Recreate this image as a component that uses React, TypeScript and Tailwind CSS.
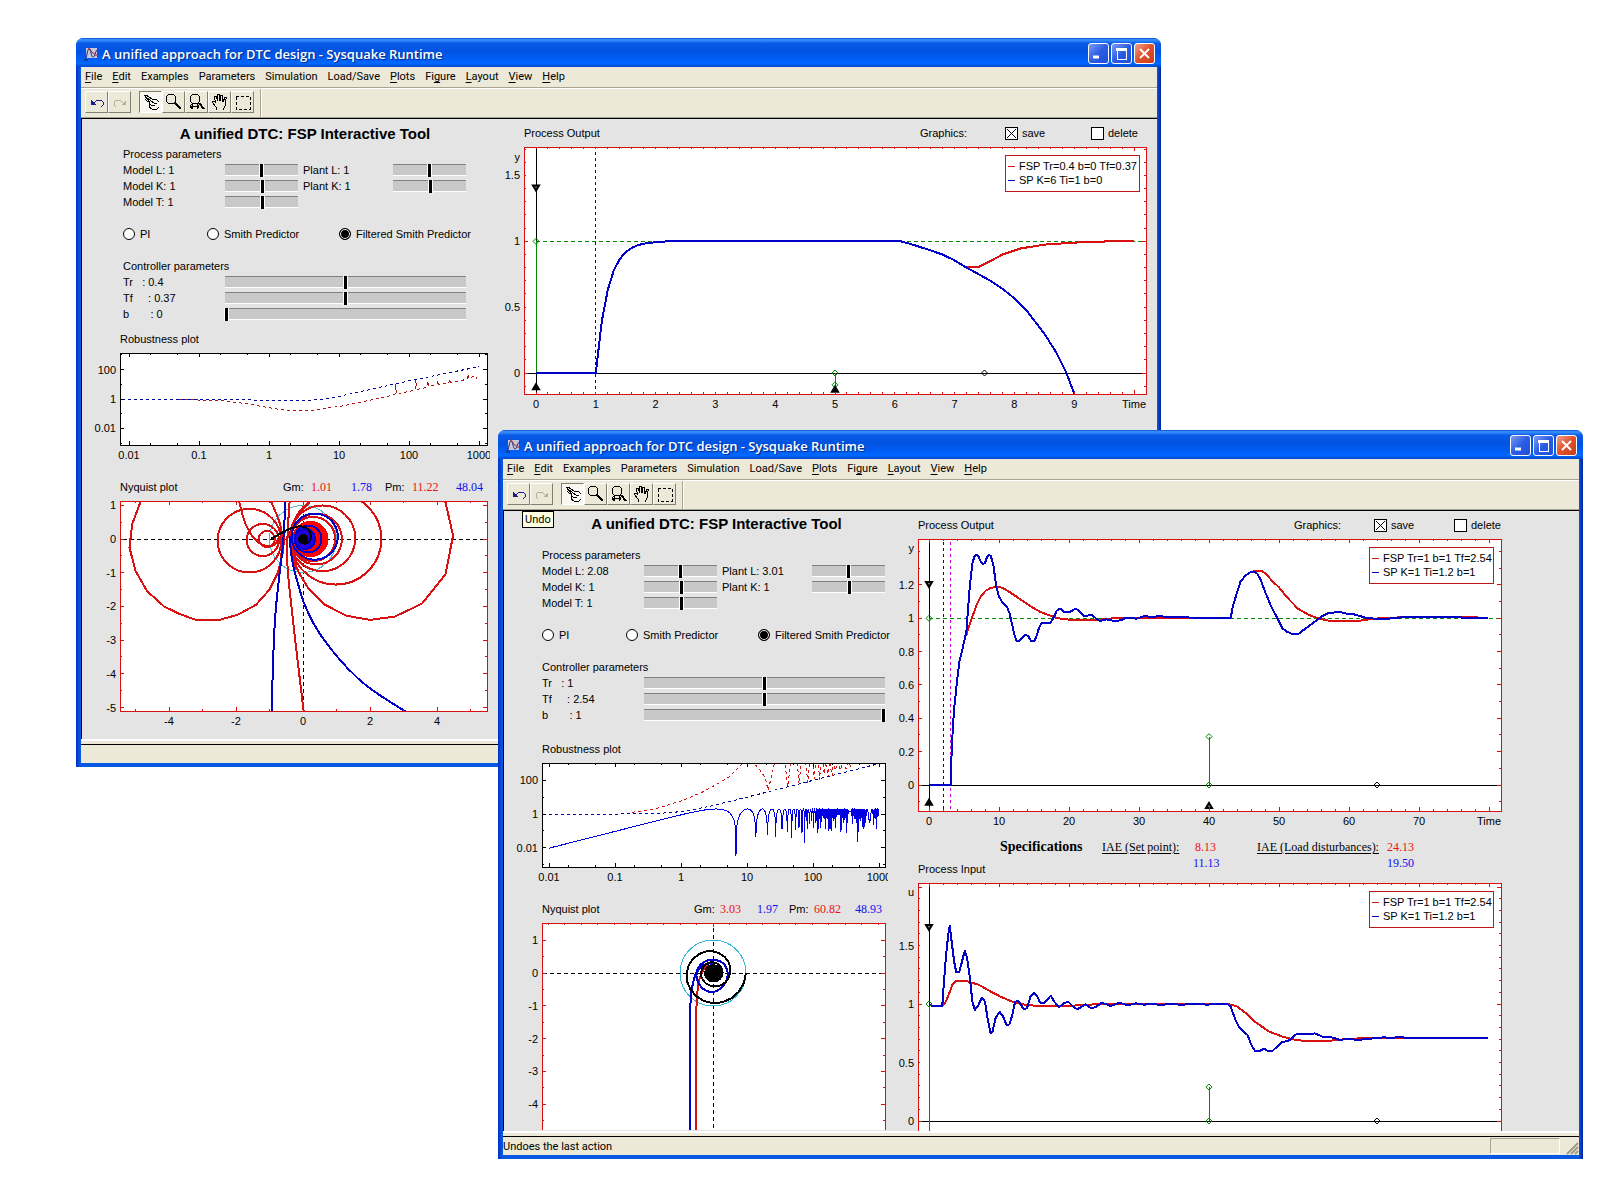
import { createContext, useContext, useId } from "react";
import type { ReactNode } from "react";

type Pt = [number, number];

interface Rect {
  x: number;
  y: number;
  w: number;
  h: number;
}

interface PlotProps {
  label: string;
  height: number;
  width: number;
  frame: Rect;
  // pixel position of the data origin and pixels per data unit
  x0: number;
  ux: number;
  y0: number;
  uy: number;
  color: string;
  xTicks: number[];
  xMinor: number[];
  yTicks: number[];
  yMinor: number[];
  xLabels?: [number, string][];
  yLabels?: [number, string][];
  overlay?: ReactNode;
  children: ReactNode;
}

const RED = "#d81010";
const BLUE = "#0000c8";
const GREEN = "#008a00";

const Scale = createContext({
  sx: (v: number) => v,
  sy: (v: number) => v,
});

function range(from: number, to: number, step: number) {
  const out: number[] = [];
  for (let i = 0; from + i * step <= to + step / 100; i++) out.push(from + i * step);
  return out;
}

function logMinor(from: number, to: number) {
  const out: number[] = [];
  for (let d = from; d < to; d++) out.push(d + Math.log10(2), d + Math.log10(5));
  return out;
}

function Plot(p: PlotProps) {
  const id = useId();
  const { frame: f } = p;
  const sx = (v: number) => p.x0 + v * p.ux;
  const sy = (v: number) => p.y0 - v * p.uy;
  const tickX = (v: number, len: number) =>
    `M${sx(v)} ${f.y}v${len}M${sx(v)} ${f.y + f.h}v${-len}`;
  const tickY = (v: number, len: number) =>
    `M${f.x} ${sy(v)}h${len}M${f.x + f.w} ${sy(v)}h${-len}`;
  const ticks = [
    ...p.xTicks.map((v) => tickX(v, 4)),
    ...p.xMinor.map((v) => tickX(v, 2)),
    ...p.yTicks.map((v) => tickY(v, 4)),
    ...p.yMinor.map((v) => tickY(v, 2)),
  ].join("");

  return (
    <Scale.Provider value={{ sx, sy }}>
      <svg
        role="img"
        aria-label={p.label}
        width={p.width}
        height={p.height}
        className="block shrink-0 overflow-hidden text-[11px]"
        shapeRendering="crispEdges"
      >
        <clipPath id={id}>
          <rect x={f.x} y={f.y} width={f.w} height={f.h} />
        </clipPath>
        <rect x={f.x} y={f.y} width={f.w} height={f.h} fill="white" />
        <g clipPath={`url(#${id})`} fill="none">
          {p.children}
        </g>
        <path d={ticks} stroke={p.color} fill="none" />
        <rect x={f.x} y={f.y} width={f.w} height={f.h} fill="none" stroke={p.color} />
        {p.xLabels?.map(([v, t]) => (
          <text key={t} x={sx(v)} y={f.y + f.h + 14} textAnchor="middle">
            {t}
          </text>
        ))}
        {p.yLabels?.map(([v, t]) => (
          <text key={t} x={f.x - 4} y={sy(v) + 4} textAnchor="end">
            {t}
          </text>
        ))}
        {p.overlay}
      </svg>
    </Scale.Provider>
  );
}

interface CurveProps {
  pts: Pt[];
  color: string;
  width?: number;
  dash?: string;
  smooth?: boolean;
}

function Curve({ pts, color, width = 2, dash, smooth }: CurveProps) {
  const { sx, sy } = useContext(Scale);
  const px = pts.map(([x, y]) => [sx(x), sy(y)]);
  let d = `M${px[0][0].toFixed(1)} ${px[0][1].toFixed(1)}`;
  if (smooth) {
    for (let i = 1; i < px.length - 1; i++) {
      const mx = (px[i][0] + px[i + 1][0]) / 2;
      const my = (px[i][1] + px[i + 1][1]) / 2;
      d += `Q${px[i][0].toFixed(1)} ${px[i][1].toFixed(1)} ${mx.toFixed(1)} ${my.toFixed(1)}`;
    }
    const last = px[px.length - 1];
    d += `L${last[0].toFixed(1)} ${last[1].toFixed(1)}`;
  } else {
    for (const [x, y] of px.slice(1)) d += `L${x.toFixed(1)} ${y.toFixed(1)}`;
  }
  return <path d={d} stroke={color} strokeWidth={width} strokeDasharray={dash} strokeLinejoin="round" />;
}

function Ring({ c, r, color, width = 2, fill }: { c: Pt; r: number; color: string; width?: number; fill?: string }) {
  const { sx, sy } = useContext(Scale);
  const k = sx(1) - sx(0);
  return <circle cx={sx(c[0])} cy={sy(c[1])} r={r * k} stroke={color} strokeWidth={width} fill={fill ?? "none"} />;
}

function Dot({ at, color }: { at: Pt; color: string }) {
  const { sx, sy } = useContext(Scale);
  return <path d={`M${sx(at[0]) - 3} ${sy(at[1])}l3 -3l3 3l-3 3z`} stroke={color} shapeRendering="auto" />;
}

function Arrow({ at, down, hollow }: { at: Pt; down?: boolean; hollow?: boolean }) {
  const { sx, sy } = useContext(Scale);
  const s = down ? 1 : -1;
  return (
    <path
      d={`M${sx(at[0]) - 3} ${sy(at[1]) - 3 * s}h6l-3 ${5 * s}z`}
      stroke="black"
      strokeWidth="2"
      fill={hollow ? "#808080" : "black"}
      shapeRendering="auto"
    />
  );
}

function Legend({ x, w, lines }: { x: number; w: number; lines: [string, string] }) {
  return (
    <g>
      <rect x={x} y={14} width={w} height={36} fill="white" stroke="#c01818" />
      <path d={`M${x + 3} 25h7`} stroke={RED} />
      <path d={`M${x + 3} 39h7`} stroke={BLUE} />
      <text x={x + 14} y={29}>{lines[0]}</text>
      <text x={x + 14} y={43}>{lines[1]}</text>
    </g>
  );
}

/* ---------- plot data ---------- */

const OUT1_BLUE: Pt[] = [
  [0, 0], [1, 0],
  ...range(1.1, 2, 0.1).map((t): Pt => [t, 1 - Math.exp(-5 * (t - 1))]),
  [2.2, 1], [6.1, 1], [6.3, 0.975], [6.5, 0.945], [6.8, 0.9], [7, 0.855], [7.2, 0.8], [7.4, 0.75],
  [7.6, 0.7], [7.8, 0.64], [8, 0.567], [8.2, 0.475], [8.5, 0.3], [8.7, 0.155], [8.87, 0], [9, -0.155],
];
const OUT1_RED: Pt[] = [
  [7.2, 0.805], [7.4, 0.805], [7.6, 0.85], [7.8, 0.9], [8, 0.93], [8.1, 0.945], [8.5, 0.975], [9, 0.99],
  [9.6, 1], [10, 1.003],
];

const OUT2_BLUE: Pt[] = [
  [0, 0], [3.1, 0], [3.2, 0.16], [3.4, 0.34], [3.6, 0.46], [4, 0.62], [4.35, 0.74], [4.8, 0.82],
  [5.35, 0.92], [5.55, 1.04], [5.85, 1.2], [6.2, 1.33], [6.5, 1.372], [6.75, 1.382], [7.05, 1.374],
  [7.35, 1.344], [7.75, 1.326], [8, 1.332], [8.3, 1.368], [8.55, 1.382], [8.85, 1.372], [9.2, 1.32],
  [9.6, 1.19], [10, 1.13], [10.55, 1.09], [11.15, 1.07], [11.5, 1.03], [11.9, 0.96], [12.2, 0.9],
  [12.5, 0.864], [12.9, 0.864], [13.3, 0.88], [13.8, 0.902], [14.2, 0.89], [14.6, 0.864], [15, 0.862],
  [15.35, 0.89], [15.7, 0.94], [16.1, 0.972], [17.35, 0.972], [17.8, 1.004], [18.25, 1.046],
  [18.75, 1.058], [19.25, 1.04], [20.2, 1.04], [20.95, 1.058], [21.5, 1.042], [22.1, 1.014],
  [23.3, 1.02], [24.1, 0.99], [24.5, 0.984], [25.3, 0.994], [26.5, 0.984], [27.4, 0.988], [28.1, 1.002],
  [29.7, 0.998], [30.8, 1.014], [31.8, 1.008], [33.1, 1.014], [34.1, 1.006], [35.5, 1.01], [36.7, 1.006],
  [38, 1.002], [43.1, 1.003], [43.4, 1.07], [43.9, 1.14], [44.5, 1.22], [45.3, 1.26], [46, 1.278],
  [46.4, 1.28], [46.9, 1.268], [47.4, 1.23], [48, 1.16], [48.9, 1.07], [49.9, 0.99], [50.5, 0.94],
  [51.1, 0.92], [51.9, 0.906], [52.7, 0.904], [53.3, 0.924], [54.3, 0.954], [55, 0.976], [56.2, 1.014],
  [57.1, 1.032], [58.7, 1.038], [59.6, 1.028], [60.9, 1.022], [62.5, 1.002], [64.7, 0.994], [68.1, 1.008],
  [73.8, 1.01], [76.3, 1.004], [79.9, 1.002],
];
const OUT2_RED: Pt[] = [
  [5.35, 0.9], [5.7, 0.95], [6.2, 1.01], [6.8, 1.08], [7.4, 1.13], [8.05, 1.164], [8.7, 1.18], [9.5, 1.188],
  [10.4, 1.184], [11.2, 1.166], [12, 1.144], [13.4, 1.104], [14.7, 1.068], [15.9, 1.038], [17.2, 1.018],
  [18.4, 1], [20, 0.992], [23.5, 0.988], [27.2, 1.004], [36, 1.004], [43.1, 1.003], [43.4, 1.07],
  [43.9, 1.14], [44.5, 1.22], [45.3, 1.26], [46, 1.278], [46.9, 1.286], [47.5, 1.284], [48.1, 1.268],
  [49.1, 1.22], [50, 1.186], [51.1, 1.128], [52.7, 1.058], [54.3, 1.02], [55.9, 0.996], [57.4, 0.984],
  [61.2, 0.984], [63.7, 0.998], [67.5, 1.006], [75.7, 1.01], [79.9, 1.002],
];

const IN_BLUE: Pt[] = [
  [0, 1], [0.3, 0.986], [1.9, 0.986], [2.1, 1.16], [2.4, 1.39], [2.75, 1.6], [2.95, 1.67], [3.2, 1.55],
  [3.6, 1.36], [3.9, 1.27], [4.35, 1.276], [4.7, 1.36], [5.1, 1.453], [5.45, 1.39], [5.85, 1.22],
  [6.2, 1.02], [6.55, 0.95], [7, 0.983], [7.55, 1.054], [8, 1.02], [8.4, 0.863], [8.8, 0.752],
  [9.1, 0.769], [9.5, 0.877], [10.1, 0.934], [10.6, 0.892], [11.1, 0.818], [11.5, 0.826], [11.9, 0.906],
  [12.3, 1.02], [12.8, 1.026], [13.5, 0.957], [14, 0.963], [14.5, 1.063], [15, 1.097], [15.4, 1.071],
  [15.9, 1.009], [16.5, 1.011], [17.4, 1.071], [17.9, 1.02], [18.6, 0.972], [19.2, 1.006], [19.9, 1.02],
  [20.6, 0.977], [21.2, 0.954], [22.3, 0.997], [23.2, 0.963], [23.8, 0.974], [24.7, 1.011], [26, 0.983],
  [27.2, 1.011], [28.4, 0.989], [29.5, 1.006], [30.7, 0.994], [32, 1.003], [33, 0.991], [34.8, 1.003],
  [36, 0.991], [37.6, 1.003], [39.8, 0.994], [41, 1.003], [42.6, 1], [43.1, 0.977], [43.7, 0.877],
  [44.3, 0.8], [45.5, 0.735], [46.1, 0.644], [46.6, 0.598], [47.2, 0.598], [47.9, 0.618], [48.4, 0.598],
  [49.1, 0.601], [50.4, 0.672], [51.6, 0.692], [52.5, 0.744], [54.3, 0.741], [55.1, 0.749], [56.2, 0.721],
  [57.4, 0.718], [58.7, 0.692], [59.9, 0.704], [61.2, 0.692], [65, 0.715], [66, 0.71], [67.2, 0.718],
  [68.1, 0.712], [79.8, 0.712],
];
const IN_RED: Pt[] = [
  [0.3, 0.986], [2, 0.986], [2.4, 1.02], [2.8, 1.077], [3.3, 1.16], [3.8, 1.197], [5.1, 1.2], [7.1, 1.165],
  [8.7, 1.11], [10.3, 1.06], [12.3, 1.01], [14, 0.991], [15.9, 0.983], [19.7, 0.983], [23.5, 0.997],
  [42.6, 1], [43.9, 0.983], [45.2, 0.926], [46.4, 0.855], [48.6, 0.764], [50.5, 0.721], [52.4, 0.692],
  [54.3, 0.681], [56.8, 0.684], [59.3, 0.698], [63.1, 0.712], [79.8, 0.712],
];

// robustness curves are given as log10(frequency), log10(magnitude)
const ROB1_BLUE: Pt[] = [
  [-2.1, 0], [-0.6, 0], [0, -0.11], [0.54, -0.11], [0.78, 0], [1.02, 0.2], [1.54, 0.75], [2, 1.24],
  [2.48, 1.7], [3, 2.2],
];
const ROB1_RED: Pt[] = [
  [-1.28, -0.04], [-0.7, -0.1], [-0.35, -0.3], [0, -0.59], [0.21, -0.75], [0.64, -0.75], [1.06, -0.47],
  [1.54, 0.02], [1.8, 0.3], [1.81, 1], [1.82, 0.35], [2.09, 0.6], [2.1, 1.27], [2.12, 0.65], [2.26, 0.8],
  [2.27, 1.2], [2.28, 0.85], [2.4, 1], [2.4, 1.25], [2.42, 1], [2.57, 1.1], [2.58, 1.35], [2.6, 1.1],
  [2.83, 1.35], [2.84, 1.7], [2.86, 1.4], [2.95, 1.6], [2.97, 1.35], [3, 1.5],
];
const ROB2_DASH: Pt[] = range(-2, 3, 0.05).map((x): Pt => [x, 0.5 * Math.log10(1 + 100 ** x)]);
const ROB2_SOLID: Pt[] = range(-2, 3, 0.0041).map((x): Pt => [
  x,
  Math.log10(Math.max(0.003, 2 * Math.abs(Math.sin(0.4615 * 10 ** x)))),
]);
const ROB2_RED: Pt[] = [
  [-0.74, 0.1], [-0.4, 0.3], [0.02, 0.8], [0.32, 1.3], [0.52, 1.72], [0.72, 2.18], [0.85, 2.67], [0.95, 3.1],
  [1.09, 3.1], [1.22, 2.5], [1.28, 2.1], [1.32, 1.4], [1.35, 1.9], [1.38, 2.4], [1.42, 3.1],
  [1.57, 3.1], [1.62, 1.64], [1.66, 3.1], [1.76, 3.1], [1.79, 1.78], [1.82, 3.1], [1.89, 3.1],
  [1.92, 1.88], [1.95, 3.1], [2, 3.1], [2.02, 2.1], [2.04, 3.1], [2.08, 3.1], [2.1, 2.05], [2.12, 3.1],
  [2.15, 3.1], [2.17, 2.4], [2.19, 3.1], [2.23, 2.2], [2.25, 3.1], [2.29, 2.3], [2.31, 3.1], [2.34, 2.6],
  [2.37, 3.1], [2.42, 2.6], [2.44, 3.1], [2.5, 2.7], [2.53, 3.1], [2.58, 2.8], [2.6, 3.1],
];

const NYQ1_RINGS: { c: Pt; r: number }[] = [
  { c: [-1.6, -0.05], r: 0.95 },
  { c: [-1.2, -0.03], r: 0.48 },
  { c: [-1.08, 0], r: 0.24 },
  { c: [0.98, 0], r: 1.36 },
  { c: [0.58, 0.02], r: 0.98 },
  { c: [0.4, 0], r: 0.76 },
  { c: [0.3, 0], r: 0.66 },
];
const NYQ1_BIG_LEFT: Pt[] = [
  [-4.83, 1.15], [-5.1, 0.45], [-5.18, -0.25], [-5, -0.95], [-4.65, -1.55], [-4.15, -2], [-3.7, -2.22],
  [-3.2, -2.4], [-2.5, -2.4], [-1.95, -2.25], [-1.4, -1.95], [-1, -1.5], [-0.75, -1], [-0.6, -0.4], [-0.55, 0.2],
];
const NYQ1_BIG_RIGHT: Pt[] = [
  [4.24, 1.15], [4.48, 0.1], [4.25, -1.05], [3.55, -1.92], [2.75, -2.3], [2, -2.4], [1.3, -2.28],
  [0.65, -1.95], [0.15, -1.45], [-0.15, -0.95], [-0.35, -0.4], [-0.42, 0.2],
];
const NYQ1_HOOK: Pt[] = [[-1.9, 1.1], [-1.8, 0.65], [-1.63, 0.25], [-1.4, -0.08], [-1.05, -0.25], [-0.8, -0.15], [-0.72, 0.05]];
const NYQ1_RED: Pt[] = [[-0.4, 1.1], [-0.48, 0], [-0.47, -0.92], [-0.32, -2.2], [-0.2, -3.3], [0.03, -5.2]];
const NYQ1_FAN1: Pt[] = [[-0.95, 1.1], [-0.72, 0.6], [-0.6, 0.1], [-0.65, -0.6], [-0.75, -1.1]];
const NYQ1_FAN2: Pt[] = [[0.2, 1.1], [-0.2, 0.7], [-0.4, 0.1], [-0.36, -0.5], [-0.2, -0.9]];
const NYQ1_BLUE_L: Pt[] = [[-0.53, 1.1], [-0.56, 0.08], [-0.7, -1], [-0.83, -2.2], [-0.88, -3.2], [-0.94, -5.2]];
const NYQ1_BLUE_R: Pt[] = [
  [-0.4, 0.1], [-0.36, -0.6], [-0.1, -1.5], [0, -1.85], [0.32, -2.55], [0.7, -3.1], [1.3, -3.83],
  [2, -4.46], [3.03, -5.1], [3.2, -5.2],
];
const NYQ1_BLACK: Pt[] = [[-0.96, 0], [-0.55, 0.24], [-0.2, 0.38], [0.05, 0.38], [0.23, 0.22], [0.25, 0], [0.12, -0.15], [-0.05, -0.12]];

const SPIRAL = [1, 0.92, 0.8, 0.66, 0.52, 0.4, 0.36, 0.33, 0.29, 0.26, 0.24, 0.22];
const NYQ2_BLACK: Pt[] = range(0, 10.8, 0.2).map((q): Pt => {
  const i = Math.floor(q);
  const r = SPIRAL[i] + (SPIRAL[i + 1] - SPIRAL[i]) * (q - i);
  return [r * Math.cos((q * Math.PI) / 2), -r * Math.sin((q * Math.PI) / 2)];
});
const NYQ2_BLUE: Pt[] = [
  [-0.71, -6], [-0.7, -1.62], [-0.68, -0.71], [-0.59, -0.2], [-0.44, 0.2], [-0.25, 0.36], [-0.05, 0.42],
  [0.22, 0.37], [0.4, 0.22], [0.47, -0.1], [0.3, -0.46], [-0.05, -0.62], [-0.38, -0.45], [-0.53, -0.1],
  [-0.44, 0.15], [-0.2, 0.3], [0, 0.28],
];
const NYQ2_RED: Pt[] = [[-0.53, -6], [-0.52, -1.62], [-0.49, -0.71], [-0.43, -0.2], [-0.3, 0.1], [-0.15, 0.25]];

const DECADES: [number, string][] = [
  [-2, "0.01"], [-1, "0.1"], [0, "1"], [1, "10"], [2, "100"], [3, "1000"],
];
const MAGNITUDES: [number, string][] = [[2, "100"], [0, "1"], [-2, "0.01"]];

/* ---------- window chrome ---------- */

function AppIcon() {
  return (
    <svg width="14" height="14" viewBox="0 0 14 14" fill="none" aria-hidden="true">
      <rect x="2" y="1" width="11" height="10" fill="#c4c8dc" />
      <path d="M1 12C3 12 3 2 5 2s2 8 4 8 2-5 4-7" stroke="#1c2c7c" />
      <path d="M4 1c3 0 3 5 5 5s1 3 4 2" stroke="#c02020" />
      <path d="M0 13h4" stroke="#20204c" />
    </svg>
  );
}

const TITLE_BUTTON = "flex size-[21px] items-center justify-center rounded-[3px] border border-white";

function TitleBar() {
  return (
    <header className="flex h-[29px] items-center gap-1 rounded-t-[7px] bg-[linear-gradient(to_bottom,#0450d0_0%,#3c94ff_6%,#0a5ce8_18%,#0052e0_45%,#005cf4_70%,#0068ff_88%,#0048cc_100%)] pt-[2px] pr-[6px] pl-2">
      <AppIcon />
      <h1 className="min-w-0 flex-1 truncate font-['Open_Sans',sans-serif] text-[13px] leading-5 font-semibold text-white [text-shadow:1px_1px_1px_#0a2a80]">
        A unified approach for DTC design - Sysquake Runtime
      </h1>
      <div className="flex gap-[2px]">
        <button aria-label="Minimize" className={`${TITLE_BUTTON} bg-[linear-gradient(135deg,#7c9cf4,#2c5ce4_50%,#2050d8)]`}>
          <svg width="13" height="13" aria-hidden="true">
            <path d="M1 10h6" stroke="white" strokeWidth="3" />
          </svg>
        </button>
        <button aria-label="Maximize" className={`${TITLE_BUTTON} bg-[linear-gradient(135deg,#7c9cf4,#2c5ce4_50%,#2050d8)]`}>
          <svg width="13" height="13" fill="none" stroke="white" aria-hidden="true" shapeRendering="crispEdges">
            <path d="M1 2h11" strokeWidth="3" />
            <path d="M2 2v10h9V2" />
          </svg>
        </button>
        <button aria-label="Close" className={`${TITLE_BUTTON} bg-[linear-gradient(135deg,#f0a088,#e0502c_50%,#c83c14)]`}>
          <svg width="13" height="13" stroke="white" strokeWidth="2" aria-hidden="true">
            <path d="M2 2l9 9M11 2l-9 9" />
          </svg>
        </button>
      </div>
    </header>
  );
}

// text before the mnemonic, mnemonic, text after it
const MENUS: [string, string, string][] = [
  ["", "F", "ile"],
  ["", "E", "dit"],
  ["Examples", "", ""],
  ["Parameters", "", ""],
  ["Simulation", "", ""],
  ["Load/Save", "", ""],
  ["", "P", "lots"],
  ["Fi", "g", "ure"],
  ["", "L", "ayout"],
  ["", "V", "iew"],
  ["", "H", "elp"],
];

function MenuBar() {
  return (
    <nav className="flex h-5 items-center gap-[10px] pl-1 font-['Roboto',sans-serif] text-[11px] leading-4">
      {MENUS.map(([pre, key, post]) => (
        <button key={pre + key + post} className="whitespace-nowrap">
          {pre}
          {key && <span className="underline underline-offset-2">{key}</span>}
          {post}
        </button>
      ))}
    </nav>
  );
}

function ToolButton({ label, pressed, children }: { label: string; pressed?: boolean; children: ReactNode }) {
  const look = pressed
    ? "bg-[#f8f7f2] border-t-[#808070] border-l-[#808070] border-r-white border-b-white"
    : "border-t-white border-l-white border-r-[#808070] border-b-[#808070]";
  return (
    <button aria-label={label} className={`flex h-[22px] w-[23px] items-center justify-center border ${look}`}>
      <svg width="18" height="18" fill="none" stroke="black" aria-hidden="true" shapeRendering="crispEdges">
        {children}
      </svg>
    </button>
  );
}

function Toolbar() {
  return (
    <div className="flex h-[29px] items-start border-t border-t-white pt-[2px] pl-1">
      <ToolButton label="Undo">
        <path d="M5 11L9 7h4l2 2v3l-2 2" stroke="#1c1c8c" />
        <path d="M3 7v5h5z" fill="#1c1c8c" stroke="none" />
      </ToolButton>
      <ToolButton label="Redo">
        <path d="M13 11L9 7H5L3 9v3l2 2" stroke="#b4b09c" />
        <path d="M15 7v5h-5z" fill="#b4b09c" stroke="none" />
      </ToolButton>
      <div className="w-2" />
      <ToolButton label="Interact" pressed>
        <path d="M2 2l6 7M2 2h2l6 4h4l2 2v1M4 4l5 4M8 9L5 8 3 6M8 9l-1 2 2 1M7 11v3l3 2h5l2-2M9 8l3 2 3 1M9 12h4" />
      </ToolButton>
      <ToolButton label="Zoom">
        <circle cx="6" cy="6" r="5" />
        <path d="M10 10l6 6" strokeWidth="2" />
      </ToolButton>
      <ToolButton label="Zoom X">
        <circle cx="7" cy="6" r="5" />
        <path d="M11 10l5 6" strokeWidth="2" />
        <path d="M2 13h9M4 11v5M9 11v5M2 13l2-2M2 13l2 3M11 13l-2-2M11 13l-2 3" />
      </ToolButton>
      <ToolButton label="Drag">
        <path d="M6 17l-1-3-4-5 1-1h1l2 2M5 10L3 4l1-1h1l2 5M7 8L6 2l1-1h1l1 7M9 8l1-6h1l1 1-1 6M12 9l2-5h1v2l-1 7-2 4" />
      </ToolButton>
      <ToolButton label="Select">
        <rect x="2" y="3" width="14" height="13" strokeDasharray="3 2" />
      </ToolButton>
      <div className="-mt-[2px] ml-[6px] h-7 w-[2px] border-r border-l border-r-white border-l-[#a8a490]" />
    </div>
  );
}

function StatusBar({ text, grip }: { text: string; grip?: boolean }) {
  return (
    <footer className="flex h-6 flex-col font-['Roboto',sans-serif] text-[11px]">
      <div className="h-[6px] border-t-2 border-b border-t-white border-b-black" />
      <div className="flex flex-1 items-end justify-end gap-[6px]">
        <span className="flex-1 leading-4">{text}</span>
        {grip && (
          <>
            <span className="mb-px h-4 w-[70px] border border-t-[#a8a490] border-r-white border-b-white border-l-[#a8a490]" />
            <svg width="13" height="16" aria-hidden="true">
              <path d="M1 15L12 4M5 15l7-7M9 15l3-3" stroke="#a09c88" strokeWidth="2" />
            </svg>
          </>
        )}
      </div>
    </footer>
  );
}

interface WindowProps {
  place: string;
  status: string;
  grip?: boolean;
  tooltip?: string;
  children: ReactNode;
}

function Window({ place, status, grip, tooltip, children }: WindowProps) {
  return (
    <section className={`absolute flex w-[1085px] flex-col rounded-t-[8px] bg-[linear-gradient(to_right,#0030c0,#0858e4_4px,#0858e4_1081px,#0020a0)] pr-1 pb-1 pl-[5px] ${place}`}>
      <div className="-mr-1 -ml-[5px]">
        <TitleBar />
      </div>
      <div className="flex min-h-0 flex-1 flex-col bg-[#ece9d8]">
        <MenuBar />
        <div className="h-px bg-[#a8a490]" />
        <Toolbar />
        <div className="h-[2px] border-b border-black bg-[#a8a490]" />
        <div className="relative flex min-h-0 flex-1 border-l border-black bg-[#e4e4e4]">
          {children}
          {tooltip && (
            <div role="tooltip" className="absolute top-0 left-[18px] border border-black bg-[#ffffe1] px-[2px] font-['Roboto',sans-serif] text-[11px] leading-[15px]">
              {tooltip}
            </div>
          )}
        </div>
        <StatusBar text={status} grip={grip} />
      </div>
    </section>
  );
}

/* ---------- figure controls ---------- */

function Slider({ id, pos }: { id: string; pos: number }) {
  return (
    <input
      id={id}
      type="range"
      min={0}
      max={100}
      defaultValue={pos}
      className="block h-3 w-full appearance-none border-y border-t-[#808080] border-b-white bg-[#c8c8c8] [&::-webkit-slider-thumb]:h-[13px] [&::-webkit-slider-thumb]:w-[3px] [&::-webkit-slider-thumb]:appearance-none [&::-webkit-slider-thumb]:bg-black [&::-webkit-slider-thumb]:shadow-[1px_0_0_white,-1px_0_0_white]"
    />
  );
}

interface ParamsProps {
  name: string;
  modelL: string;
  plantL: string;
  tr: string;
  tf: string;
  b: string;
  bPos: number;
}

function Parameters({ name, modelL, plantL, tr, tf, b, bPos }: ParamsProps) {
  return (
    <div className="leading-4">
      <p>Process parameters</p>
      <div className="grid grid-cols-[102px_73px_95px_73px] items-center">
        <label htmlFor={`${name}-ml`}>Model L: {modelL}</label>
        <Slider id={`${name}-ml`} pos={50} />
        <label htmlFor={`${name}-pl`} className="pl-[5px]">Plant L: {plantL}</label>
        <Slider id={`${name}-pl`} pos={50} />
        <label htmlFor={`${name}-mk`}>Model K: 1</label>
        <Slider id={`${name}-mk`} pos={51} />
        <label htmlFor={`${name}-pk`} className="pl-[5px]">Plant K: 1</label>
        <Slider id={`${name}-pk`} pos={51} />
        <label htmlFor={`${name}-mt`}>Model T: 1</label>
        <Slider id={`${name}-mt`} pos={51} />
      </div>
      <div className="grid grid-cols-[84px_132px_auto] py-4">
        {["PI", "Smith Predictor", "Filtered Smith Predictor"].map((t, i) => (
          <label key={t} className="flex items-center gap-[5px] whitespace-nowrap">
            <input
              type="radio"
              name={`${name}-kind`}
              defaultChecked={i === 2}
              className="size-3 appearance-none rounded-full border border-black bg-white checked:bg-black checked:shadow-[inset_0_0_0_1px_white]"
            />
            {t}
          </label>
        ))}
      </div>
      <p>Controller parameters</p>
      <div className="grid grid-cols-[102px_241px] items-center">
        <label htmlFor={`${name}-tr`} className="whitespace-pre">{`Tr   : ${tr}`}</label>
        <Slider id={`${name}-tr`} pos={50} />
        <label htmlFor={`${name}-tf`} className="whitespace-pre">{`Tf     : ${tf}`}</label>
        <Slider id={`${name}-tf`} pos={50} />
        <label htmlFor={`${name}-b`} className="whitespace-pre">{`b       : ${b}`}</label>
        <Slider id={`${name}-b`} pos={bPos} />
      </div>
    </div>
  );
}

function CheckBox({ text, checked }: { text: string; checked?: boolean }) {
  return (
    <label className="flex items-center gap-1">
      <span className="relative flex">
        <input type="checkbox" defaultChecked={checked} className="peer size-[13px] appearance-none border border-black bg-white" />
        <svg className="pointer-events-none absolute inset-0 hidden peer-checked:block" width="13" height="13" stroke="black" aria-hidden="true">
          <path d="M2 2l9 9M11 2l-9 9" />
        </svg>
      </span>
      {text}
    </label>
  );
}

function OutputHeader({ cols }: { cols: string }) {
  return (
    <div className={`grid leading-4 ${cols}`}>
      <span>Process Output</span>
      <span>Graphics:</span>
      <CheckBox text="save" checked />
      <CheckBox text="delete" />
    </div>
  );
}

function NyquistHeader({ gm, pm, cols }: { gm: [string, string]; pm: [string, string]; cols: string }) {
  const serif = "font-['Liberation_Serif',serif] text-[12px]";
  return (
    <div className={`grid leading-4 ${cols}`}>
      <span>Nyquist plot</span>
      <span>Gm:</span>
      <span className={`${serif} text-[#f01010]`}>{gm[0]}</span>
      <span className={`${serif} text-[#1010f0]`}>{gm[1]}</span>
      <span>Pm:</span>
      <span className={`${serif} text-[#f01010]`}>{pm[0]}</span>
      <span className={`${serif} text-[#1010f0]`}>{pm[1]}</span>
    </div>
  );
}

const FIGURE_TITLE = "text-center text-[15px] leading-[18px] font-bold";

/* ---------- figures ---------- */

function FirstFigure() {
  return (
    <>
      <div className="flex w-[408px] shrink-0 flex-col pt-[6px] pl-2">
        <h2 className={`${FIGURE_TITLE} pl-[30px]`}>A unified DTC: FSP Interactive Tool</h2>
        <div className="pt-[3px] pl-[33px]">
          <Parameters name="w1" modelL="1" plantL="1" tr="0.4" tf="0.37" b="0" bPos={0} />
        </div>
        <h3 className="mt-[9px] pl-[30px] leading-4">Robustness plot</h3>
        <Plot
          label="Robustness plot"
          width={400}
          height={132}
          frame={{ x: 30, y: 6, w: 367, h: 92 }}
          x0={179}
          ux={70}
          y0={52}
          uy={14.7}
          color="black"
          xTicks={range(-2, 3, 1)}
          xMinor={logMinor(-2, 3)}
          yTicks={[-2, 0, 2]}
          yMinor={[-3, -1, 1, 3]}
          xLabels={DECADES}
          yLabels={MAGNITUDES}
        >
          <Curve pts={ROB1_RED} color="#b01010" width={1} dash="3 3" />
          <Curve pts={ROB1_BLUE} color="#0000a0" width={1} dash="3 3" />
        </Plot>
        <NyquistHeader gm={["1.01", "1.78"]} pm={["11.22", "48.04"]} cols="grid-cols-[163px_28px_40px_34px_27px_44px_auto] pl-[30px]" />
        <Plot
          label="Nyquist plot"
          width={400}
          height={243}
          frame={{ x: 30, y: 6, w: 367, h: 210 }}
          x0={213}
          ux={33.5}
          y0={44}
          uy={33.7}
          color={RED}
          xTicks={[-4, -2, 0, 2, 4]}
          xMinor={range(-5, 5, 1)}
          yTicks={range(-5, 1, 1)}
          yMinor={range(-5, 1, 0.5)}
          xLabels={[[-4, "-4"], [-2, "-2"], [0, "0"], [2, "2"], [4, "4"]]}
          yLabels={[[1, "1"], [0, "0"], [-1, "-1"], [-2, "-2"], [-3, "-3"], [-4, "-4"], [-5, "-5"]]}
        >
          <Curve pts={[[-6, 0], [6, 0]]} color="black" width={1} dash="4 3" />
          <Curve pts={[[0, 2], [0, -6]]} color="black" width={1} dash="4 3" />
          <Ring c={[0, 0]} r={1} color="#50b0d0" width={1} />
          {NYQ1_RINGS.map((r) => (
            <Ring key={r.r} c={r.c} r={r.r} color={RED} />
          ))}
          <Curve pts={NYQ1_BIG_LEFT} color={RED} />
          <Curve pts={NYQ1_BIG_RIGHT} color={RED} />
          <Curve pts={NYQ1_HOOK} color={RED} smooth />
          <Curve pts={NYQ1_FAN1} color={RED} smooth />
          <Curve pts={NYQ1_FAN2} color={RED} smooth />
          <Ring c={[0.22, 0]} r={0.42} color="#ff0000" width={8} fill="#ff0000" />
          <Curve pts={NYQ1_RED} color={RED} smooth />
          <Curve pts={NYQ1_BLUE_L} color={BLUE} smooth />
          <Curve pts={NYQ1_BLUE_R} color={BLUE} smooth />
          <Ring c={[0.35, 0.07]} r={0.69} color={BLUE} />
          <Ring c={[0.15, 0]} r={0.4} color={BLUE} />
          <Ring c={[0.06, 0]} r={0.3} color={BLUE} fill="#2000e0" />
          <Curve pts={NYQ1_BLACK} color="black" smooth />
          <Ring c={[0, 0]} r={0.12} color="black" fill="black" />
        </Plot>
      </div>
      <div className="min-w-0 flex-1 pt-[6px]">
        <OutputHeader cols="grid-cols-[396px_85px_86px_auto] pl-[34px]" />
        <Plot
          label="Process output"
          width={664}
          height={280}
          frame={{ x: 34, y: 6, w: 622, h: 247 }}
          x0={46}
          ux={59.8}
          y0={232}
          uy={131.7}
          color={RED}
          xTicks={[10]}
          xMinor={range(0, 10, 0.2)}
          yTicks={[0, 1]}
          yMinor={range(-0.1, 1.7, 0.1)}
          xLabels={[...range(0, 9, 1).map((v): [number, string] => [v, String(v)]), [10, "Time"]]}
          yLabels={[[1.64, "y"], [1.5, "1.5"], [1, "1"], [0.5, "0.5"], [0, "0"]]}
          overlay={<Legend x={515} w={134} lines={["FSP Tr=0.4 b=0 Tf=0.37", "SP K=6 Ti=1 b=0"]} />}
        >
          <Curve pts={[[0, 2], [0, -1]]} color="black" width={1} />
          <Curve pts={[[-1, 0], [11, 0]]} color="black" width={1} />
          <Curve pts={[[0, 1], [11, 1]]} color={GREEN} width={1} dash="4 3" />
          <Curve pts={[[0, 1], [0, 0]]} color={GREEN} width={1} />
          <Curve pts={[[1, 2], [1, -1]]} color={BLUE} width={1} dash="3 3" />
          <Curve pts={OUT1_RED} color={RED} />
          <Curve pts={OUT1_BLUE} color={BLUE} />
          <Curve pts={[[5, 0], [5, -0.1]]} color={GREEN} width={1} />
          <Dot at={[0, 1]} color={GREEN} />
          <Dot at={[5, 0]} color={GREEN} />
          <Dot at={[5, -0.09]} color={GREEN} />
          <Dot at={[7.5, 0]} color="black" />
          <Arrow at={[0, 1.4]} down hollow />
          <Arrow at={[0, -0.1]} />
          <Arrow at={[5, -0.12]} />
        </Plot>
      </div>
    </>
  );
}

function SecondFigure() {
  const shared = {
    width: 690,
    x0: 41,
    ux: 7,
    color: RED,
    xTicks: range(0, 80, 10),
    xMinor: range(0, 80, 2),
  };
  const legend = <Legend x={481} w={124} lines={["FSP Tr=1 b=1 Tf=2.54", "SP K=1 Ti=1.2 b=1"]} />;
  const link = "whitespace-nowrap underline underline-offset-2";

  return (
    <>
      <div className="flex w-[384px] shrink-0 flex-col pt-1 pl-2">
        <h2 className={`${FIGURE_TITLE} pl-[33px]`}>A unified DTC: FSP Interactive Tool</h2>
        <div className="pt-[14px] pl-[30px]">
          <Parameters name="w2" modelL="2.08" plantL="3.01" tr="1" tf="2.54" b="1" bPos={100} />
        </div>
        <h3 className="mt-[18px] pl-[30px] leading-4">Robustness plot</h3>
        <Plot
          label="Robustness plot"
          width={376}
          height={144}
          frame={{ x: 30, y: 6, w: 343, h: 104 }}
          x0={169}
          ux={66}
          y0={57}
          uy={16.8}
          color="black"
          xTicks={range(-2, 3, 1)}
          xMinor={logMinor(-2, 3)}
          yTicks={[-2, 0, 2]}
          yMinor={[-3, -1, 1, 3]}
          xLabels={DECADES}
          yLabels={MAGNITUDES}
        >
          <Curve pts={ROB2_RED} color={RED} width={1} dash="3 3" />
          <Curve pts={ROB2_DASH} color="#0000a0" width={1} dash="3 3" />
          <Curve pts={ROB2_SOLID} color="#0000e0" width={1} />
        </Plot>
        <NyquistHeader gm={["3.03", "1.97"]} pm={["60.82", "48.93"]} cols="grid-cols-[152px_26px_37px_32px_25px_41px_auto] pl-[30px]" />
        <Plot
          label="Nyquist plot"
          width={376}
          height={213}
          frame={{ x: 30, y: 6, w: 343, h: 240 }}
          x0={201}
          ux={33}
          y0={56}
          uy={32.8}
          color={RED}
          xTicks={[0]}
          xMinor={range(-5, 5, 0.5)}
          yTicks={range(-5, 1, 1)}
          yMinor={range(-5, 1, 0.5)}
          yLabels={[[1, "1"], [0, "0"], [-1, "-1"], [-2, "-2"], [-3, "-3"], [-4, "-4"]]}
        >
          <Curve pts={[[-6, 0], [6, 0]]} color="black" width={1} dash="4 3" />
          <Curve pts={[[0, 2], [0, -6]]} color="black" width={1} dash="4 3" />
          <Ring c={[0, 0]} r={1} color="#30b8d8" width={1} />
          <Curve pts={NYQ2_RED} color={RED} smooth />
          <Curve pts={NYQ2_BLUE} color={BLUE} smooth />
          <Curve pts={NYQ2_BLACK} color="black" />
          <Ring c={[0, 0]} r={0.24} color="black" fill="black" />
        </Plot>
      </div>
      <div className="flex min-w-0 flex-1 flex-col overflow-hidden pt-[6px]">
        <OutputHeader cols="grid-cols-[376px_80px_80px_auto] pl-[30px]" />
        <Plot
          {...shared}
          label="Process output"
          height={306}
          frame={{ x: 30, y: 6, w: 583, h: 272 }}
          y0={252}
          uy={166.7}
          yTicks={range(0, 1.2, 0.2)}
          yMinor={range(-0.1, 1.4, 0.1)}
          xLabels={[...range(0, 70, 10).map((v): [number, string] => [v, String(v)]), [80, "Time"]]}
          yLabels={[[1.42, "y"], [1.2, "1.2"], [1, "1"], [0.8, "0.8"], [0.6, "0.6"], [0.4, "0.4"], [0.2, "0.2"], [0, "0"]]}
          overlay={legend}
        >
          <Curve pts={[[0, 2], [0, -1]]} color="black" width={1} />
          <Curve pts={[[-2, 0], [90, 0]]} color="black" width={1} />
          <Curve pts={[[0, 1], [90, 1]]} color={GREEN} width={1} dash="4 3" />
          <Curve pts={[[0, 1], [0, 0]]} color={GREEN} width={1} />
          <Curve pts={[[2.1, 2], [2.1, -1]]} color={BLUE} width={1} dash="3 3" />
          <Curve pts={[[3, 2], [3, -1]]} color="#d800d8" width={1} dash="3 3" />
          <Curve pts={OUT2_RED} color={RED} />
          <Curve pts={OUT2_BLUE} color={BLUE} />
          <Curve pts={[[40, 0], [40, 0.29]]} color={GREEN} width={1} />
          <Dot at={[0, 1]} color={GREEN} />
          <Dot at={[40, 0.29]} color={GREEN} />
          <Dot at={[40, 0]} color={GREEN} />
          <Dot at={[64, 0]} color="black" />
          <Arrow at={[0, 1.2]} down hollow />
          <Arrow at={[0, -0.1]} />
          <Arrow at={[40, -0.12]} hollow />
        </Plot>
        <div className="grid grid-cols-[102px_91px_64px_130px_auto] pl-28 font-['Liberation_Serif',serif] text-[12px] leading-4">
          <b className="text-[14px]">Specifications</b>
          <span className={link}>IAE (Set point):</span>
          <span className="pl-[2px] text-[#f01010]">8.13</span>
          <span className={link}>IAE (Load disturbances):</span>
          <span className="text-[#f01010]">24.13</span>
          <span className="col-start-3 text-[#1010f0]">11.13</span>
          <span className="col-start-5 text-[#1010f0]">19.50</span>
        </div>
        <h3 className="-mt-[10px] pl-[30px] leading-4">Process Input</h3>
        <Plot
          {...shared}
          label="Process input"
          height={260}
          frame={{ x: 30, y: 6, w: 583, h: 300 }}
          y0={244}
          uy={117}
          yTicks={[0, 1, 2]}
          yMinor={range(0, 2, 0.1)}
          yLabels={[[1.96, "u"], [1.5, "1.5"], [1, "1"], [0.5, "0.5"], [0, "0"]]}
          overlay={legend}
        >
          <Curve pts={[[0, 3], [0, -1]]} color="black" width={1} />
          <Curve pts={[[-2, 0], [90, 0]]} color="black" width={1} />
          <Curve pts={[[0, 1], [0, -1]]} color={GREEN} width={1} />
          <Curve pts={IN_RED} color={RED} />
          <Curve pts={IN_BLUE} color={BLUE} />
          <Curve pts={[[40, 0], [40, 0.29]]} color={GREEN} width={1} />
          <Dot at={[0, 1]} color={GREEN} />
          <Dot at={[40, 0.29]} color={GREEN} />
          <Dot at={[40, 0]} color={GREEN} />
          <Dot at={[64, 0]} color="black" />
          <Arrow at={[0, 1.65]} down hollow />
        </Plot>
      </div>
    </>
  );
}

export default function App() {
  return (
    <main className="relative min-h-screen overflow-hidden bg-white font-['Liberation_Sans',sans-serif] text-[11px] text-black">
      <Window place="left-[76px] top-[38px] h-[729px]" status="">
        <FirstFigure />
      </Window>
      <Window place="left-[498px] top-[430px] h-[729px]" status="Undoes the last action" grip tooltip="Undo">
        <SecondFigure />
      </Window>
    </main>
  );
}
